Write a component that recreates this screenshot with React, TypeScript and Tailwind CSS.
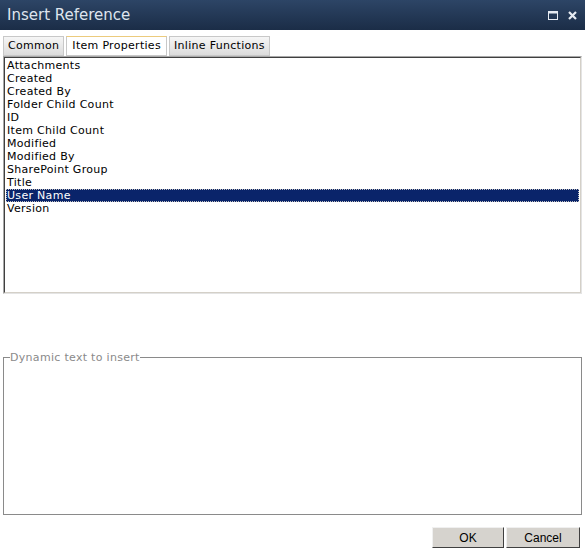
import { useState } from "react";

const fields = [
  "Attachments",
  "Created",
  "Created By",
  "Folder Child Count",
  "ID",
  "Item Child Count",
  "Modified",
  "Modified By",
  "SharePoint Group",
  "Title",
  "User Name",
  "Version",
];

const tabs = ["Common", "Item Properties", "Inline Functions"];

export default function App() {
  const [selected, setSelected] = useState("User Name");
  const [tab, setTab] = useState("Item Properties");

  return (
    <div className="flex h-[558px] w-[585px] flex-col bg-white font-['DejaVu_Sans',sans-serif] text-[11px] tracking-[0.3px] text-black">
      {/* title bar */}
      <div className="flex h-[30px] items-center justify-between bg-gradient-to-b from-[#2d4566] to-[#1b2d47] pl-[7px] pr-[8px]">
        <span className="text-[15px] leading-none tracking-normal text-[#dfe5ee]">Insert Reference</span>
        <div className="flex items-center gap-[10px]">
          <svg width="10" height="9" viewBox="0 0 10 9">
            <rect x="0.5" y="0.5" width="9" height="8" fill="none" stroke="#e6ebf2" strokeWidth="1" />
            <rect x="0" y="0" width="10" height="2.5" fill="#e6ebf2" />
          </svg>
          <svg width="9" height="9" viewBox="0 0 9 9">
            <path d="M1 1 L8 8 M8 1 L1 8" stroke="#e6ebf2" strokeWidth="2.2" />
          </svg>
        </div>
      </div>

      {/* tabs */}
      <div className="mt-[6px] flex items-end gap-[2px] pl-[3px]">
        {tabs.map((t) => {
          const active = t === tab;
          return (
            <button
              key={t}
              onClick={() => setTab(t)}
              className={
                active
                  ? "h-[20px] border border-[#c8c8c8] border-t-[#eccb7d] bg-white px-[5px] text-[11px] leading-[18px] tracking-[0.3px] text-black"
                  : "h-[20px] border border-[#c8c8c8] bg-gradient-to-b from-[#f6f6f6] to-[#dcdcdc] px-[4px] text-[11px] leading-[18px] tracking-[0.3px] text-black"
              }
            >
              {t}
            </button>
          );
        })}
      </div>

      {/* list box */}
      <div className="mx-[3px] h-[238px] border border-[#a8a8a8] border-r-[#e4e4e4] border-b-[#e4e4e4]">
        <div className="h-full border border-[#404040] border-r-[#d4d0c8] border-b-[#d4d0c8] bg-white pt-[1px] pl-[1px] pr-[1px]">
          {fields.map((f) => (
            <div
              key={f}
              onClick={() => setSelected(f)}
              className={
                f === selected
                  ? "h-[13px] border border-dotted border-[#c0c0c0] bg-[#0a246a] leading-[11px] text-white"
                  : "h-[13px] border border-transparent leading-[11px]"
              }
            >
              {f}
            </div>
          ))}
        </div>
      </div>

      {/* dynamic text */}
      <fieldset className="mx-[3px] mt-[58px] h-[163px] border border-[#8a8a8a] pl-[6px]">
        <legend className="px-0 text-[11px] leading-[11px] text-[#8a8a8a]">Dynamic text to insert</legend>
      </fieldset>

      {/* buttons */}
      <div className="mt-[12px] flex justify-end gap-[2px] pr-[5px] font-['Liberation_Sans',sans-serif] tracking-normal">
        <button className="h-[21px] w-[72px] border border-[#f0f0f0] border-r-[#404040] border-b-[#404040] bg-[#d6d3ce] text-[12px] text-black">
          OK
        </button>
        <button className="h-[21px] w-[74px] border border-[#f0f0f0] border-r-[#404040] border-b-[#404040] bg-[#d6d3ce] text-[12px] text-black">
          Cancel
        </button>
      </div>
    </div>
  );
}
